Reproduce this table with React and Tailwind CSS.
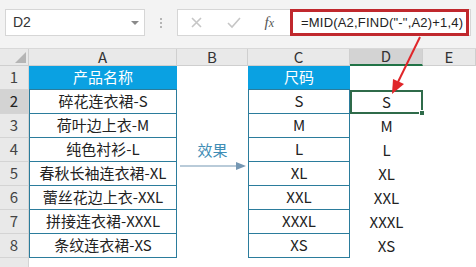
const names = [
  '碎花连衣裙-S',
  '荷叶边上衣-M',
  '纯色衬衫-L',
  '春秋长袖连衣裙-XL',
  '蕾丝花边上衣-XXL',
  '拼接连衣裙-XXXL',
  '条纹连衣裙-XS',
]
const sizes = ['S', 'M', 'L', 'XL', 'XXL', 'XXXL', 'XS']

function RowHead({ n, active }) {
  return (
    <div
      className={
        'flex items-center justify-center border-r border-b border-[#d4d4d4] text-[15px] ' +
        (active ? 'bg-[#d3d3d3] text-[#222]' : 'bg-[#e9e9e9] text-[#444]')
      }
    >
      {n}
    </div>
  )
}

function ColHead({ label, active }) {
  return (
    <div
      className={
        'flex items-center justify-center border-r border-[#cfcfcf] text-[15px] text-[#333] ' +
        (active ? 'bg-[#d3d3d3] border-b-2 border-b-[#217346]' : 'bg-[#e9e9e9] border-b border-b-[#cfcfcf]')
      }
    >
      {label}
    </div>
  )
}

export default function App() {
  return (
    <div className="relative w-[476px] h-[267px] overflow-hidden bg-white font-['Noto_Sans_CJK_SC',sans-serif]">
      {/* toolbar */}
      <div className="h-[48px] bg-[#f3f3f3] flex items-start pt-[9px] pl-[5px]">
        <div className="w-[140px] h-[27px] bg-white border border-[#d6d6d6] flex items-center justify-between pl-[7px] pr-[4px]">
          <span className="text-[14px] text-[#333] font-['Liberation_Sans',sans-serif]">D2</span>
          <svg width="10" height="6" viewBox="0 0 10 6"><path d="M1 1h8L5 5z" fill="#8a8a8a" /></svg>
        </div>
        <div className="w-[32px] h-[27px] flex flex-col items-center justify-center gap-[2px]">
          <span className="w-[2px] h-[2px] bg-[#b5b5b5]" />
          <span className="w-[2px] h-[2px] bg-[#b5b5b5]" />
          <span className="w-[2px] h-[2px] bg-[#b5b5b5]" />
        </div>
        <div className="w-[294px] h-[27px] bg-white border border-[#d6d6d6] flex items-center">
          <div className="w-[112px] flex items-center justify-around">
            <svg width="13" height="13" viewBox="0 0 13 13"><path d="M2 2l9 9M11 2l-9 9" stroke="#c6c6c6" strokeWidth="1.6" /></svg>
            <svg width="14" height="12" viewBox="0 0 14 12"><path d="M1 6l4 4 8-9" stroke="#c6c6c6" strokeWidth="1.6" fill="none" /></svg>
            <span className="italic text-[15px] text-[#555] font-['Liberation_Serif',serif] pr-[4px]">f<span className="text-[12px]">x</span></span>
          </div>
          <div className="flex-1 h-[27px] -my-px mr-[1px] border-[3px] border-[#c0282d] flex items-center pl-[8px] overflow-hidden">
            <span className="whitespace-nowrap text-[13px] tracking-[0.2px] text-[#222] font-['Liberation_Sans',sans-serif]">=MID(A2,FIND("-",A2)+1,4)</span>
          </div>
        </div>
      </div>

      {/* sheet */}
      <div className="grid grid-cols-[29px_148px_71px_102px_73px_1fr] grid-rows-[17px_24px_24px_24px_24px_24px_24px_24px_24px_24px] border-t border-[#d8d8d8]">
        {/* column headers */}
        <div className="bg-[#e9e9e9] border-r border-b border-[#cfcfcf] flex items-end justify-end p-[2px]">
          <svg width="11" height="11" viewBox="0 0 11 11"><path d="M11 0v11H0z" fill="#b5b5b5" /></svg>
        </div>
        <ColHead label="A" />
        <ColHead label="B" />
        <ColHead label="C" />
        <ColHead label="D" active />
        <ColHead label="E" />

        {/* row 1 */}
        <RowHead n={1} />
        <div className="bg-[#0aa1e2] border-b border-[#2b7c9c] flex items-center justify-center text-white text-[15px]">产品名称</div>
        <div />
        <div className="bg-[#0aa1e2] border-b border-[#2b7c9c] flex items-center justify-center text-white text-[15px]">尺码</div>
        <div />
        <div />

        {names.map((name, i) => {
          const row = i + 2
          return [
            <RowHead key={'h' + row} n={row} active={row === 2} />,
            <div key={'a' + row} className="border-l border-r border-b border-[#2b7c9c] flex items-center justify-center text-[15px] text-[#222] bg-white">
              {name}
            </div>,
            row === 4 ? (
              <div key="b4" className="row-span-2 flex flex-col items-center pt-[2px]">
                <span className="text-[15px] text-[#3f8db5] leading-[20px]">效果</span>
                <svg className="mt-[2px]" width="71" height="8" viewBox="0 0 71 8">
                  <path d="M3 4h58" stroke="#7597b3" strokeWidth="1.2" />
                  <path d="M59 0l10 4-10 4z" fill="#7597b3" />
                </svg>
              </div>
            ) : row === 5 ? null : (
              <div key={'b' + row} />
            ),
            <div key={'c' + row} className="border-l border-r border-b border-[#2b7c9c] flex items-center justify-center text-[15px] text-[#222] bg-white">
              {sizes[i]}
            </div>,
            row === 2 ? (
              <div key="d2" className="relative border-2 border-[#2f6b4a] flex items-center justify-center text-[15px] text-[#222]">
                S
                <span className="absolute -right-[4px] -bottom-[4px] w-[6px] h-[6px] bg-[#2f6b4a] border border-white" />
              </div>
            ) : (
              <div key={'d' + row} className="flex items-center justify-center text-[15px] text-[#222]">
                {sizes[i]}
              </div>
            ),
            <div key={'e' + row} />,
          ]
        })}

        <RowHead n="" />
      </div>

      {/* red pointer arrow */}
      <svg className="absolute left-0 top-0 pointer-events-none" width="476" height="267">
        <path d="M420 37L398 82" stroke="#e0262a" strokeWidth="2" />
        <path d="M392 94l1-15 11 5z" fill="#e0262a" />
      </svg>
    </div>
  )
}
